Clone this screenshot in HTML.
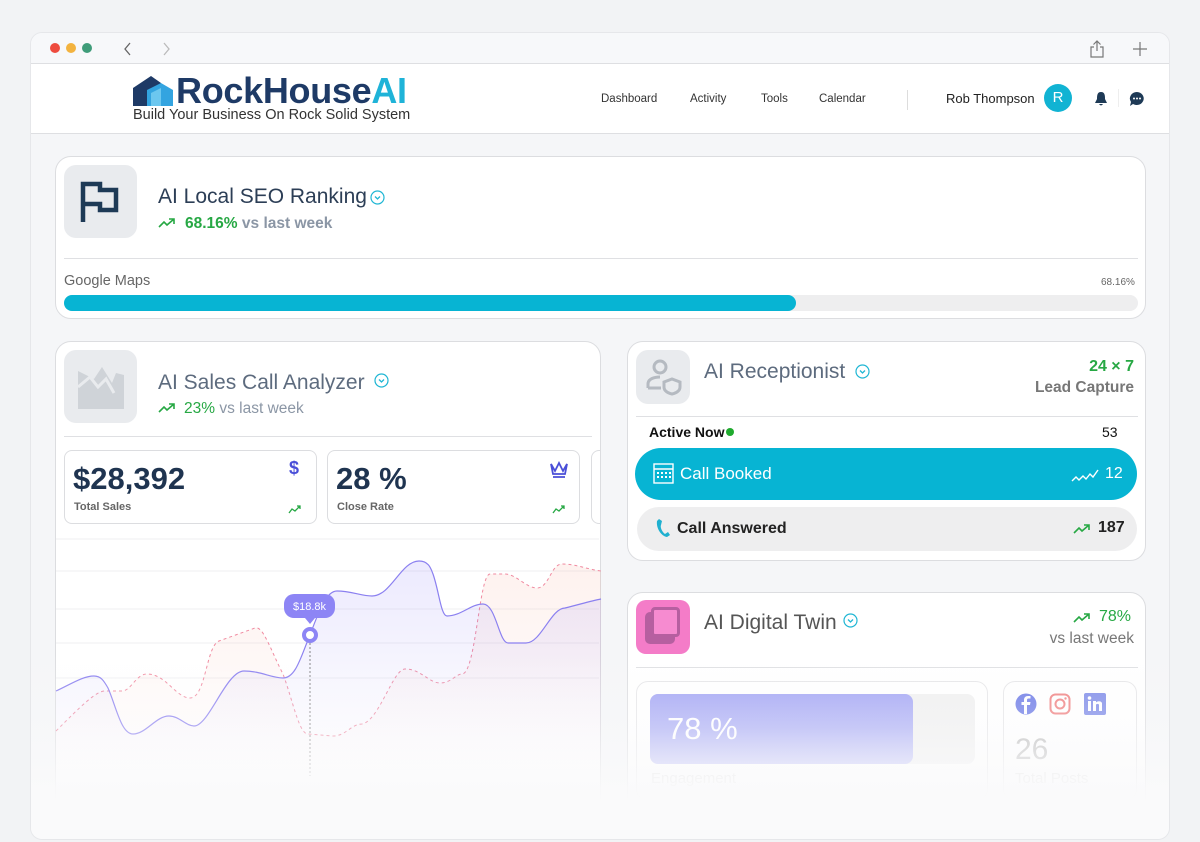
<!DOCTYPE html>
<html><head><meta charset="utf-8"><style>
*{box-sizing:border-box;margin:0;padding:0}
body{width:1200px;height:842px;background:#f2f3f5;font-family:"Liberation Sans",sans-serif;position:relative;overflow:hidden}
.a{position:absolute}
.win{left:30px;top:32px;width:1140px;height:808px;background:#f5f6f8;border-radius:12px;overflow:hidden;border:1px solid #e6e7ea}
.card{background:#fff;border:1px solid #dcdde0;border-radius:16px}
.ico{background:#e9ebee;border-radius:12px}
.t{color:#2c3e56}
.g{color:#27a844}
.mut{color:#8b96a5}
.sep{height:1px;background:#dfe0e3}
</style></head><body>
<div class="a win">
 <div class="a" style="left:0;top:0;width:1140px;height:31px;background:#f7f8fa;border-bottom:1px solid #dedfe2"></div>
 <div class="a" style="left:19px;top:10px;width:10px;height:10px;border-radius:50%;background:#ee4b3e"></div>
 <div class="a" style="left:35px;top:10px;width:10px;height:10px;border-radius:50%;background:#f3b33f"></div>
 <div class="a" style="left:51px;top:10px;width:10px;height:10px;border-radius:50%;background:#3f9c79"></div>
 <svg class="a" style="left:90px;top:8px" width="14" height="16"><path d="M9 2 L4 8 L9 14" stroke="#666" stroke-width="1.3" fill="none"/></svg>
 <svg class="a" style="left:128px;top:8px" width="14" height="16"><path d="M5 2 L10 8 L5 14" stroke="#bbb" stroke-width="1.3" fill="none"/></svg>
 <svg class="a" style="left:1057px;top:6px" width="18" height="20"><path d="M9 2 V12 M5.5 5.5 L9 2 L12.5 5.5 M6 8 H3 V18 H15 V8 H12" stroke="#777" stroke-width="1.2" fill="none"/></svg>
 <svg class="a" style="left:1101px;top:8px" width="16" height="16"><path d="M8 1 V15 M1 8 H15" stroke="#777" stroke-width="1.2"/></svg>
 <div class="a" style="left:0;top:31px;width:1140px;height:70px;background:#fff;border-bottom:1px solid #dedfe2"></div>
 <svg class="a" style="left:102px;top:43px" width="42" height="30"><path d="M0 12 L18 0 L28 7 L28 30 L0 30Z" fill="#1e3a66"/><path d="M14 30 L14 14 L28 7 L40 14 L40 30Z" fill="#33a4e0"/><path d="M18 30 L18 17 L28 12 L28 30Z" fill="#6cc7ef"/></svg>
 <div class="a" style="left:145px;top:37px;font-size:36px;font-weight:bold;color:#1e3a66;letter-spacing:-0.3px">RockHouse<span style="color:#1fb3d8">AI</span></div>
 <div class="a" style="left:102px;top:74px;font-size:14.5px;color:#333">Build Your Business On Rock Solid System</div>
 <div class="a" style="left:570px;top:60px;font-size:11.5px;color:#333">Dashboard</div>
 <div class="a" style="left:659px;top:60px;font-size:11.5px;color:#333">Activity</div>
 <div class="a" style="left:730px;top:60px;font-size:11.5px;color:#333">Tools</div>
 <div class="a" style="left:788px;top:60px;font-size:11.5px;color:#333">Calendar</div>
 <div class="a" style="left:876px;top:57px;width:1px;height:20px;background:#ddd"></div>
 <div class="a" style="left:915px;top:58px;font-size:13px;color:#222">Rob Thompson</div>
 <div class="a" style="left:1013px;top:51px;width:28px;height:28px;border-radius:50%;background:#11b3d3;color:#fff;font-size:15px;text-align:center;line-height:28px">R</div>
 <svg class="a" style="left:1063px;top:58px" width="14" height="16"><path d="M7 1 C3 1 3 5 3 8 L1 12 H13 L11 8 C11 5 11 1 7 1Z M5 13 Q7 16 9 13Z" fill="#1e3a56"/></svg>
 <div class="a" style="left:1087px;top:56px;width:1px;height:18px;background:#eee"></div>
 <svg class="a" style="left:1098px;top:58px" width="16" height="16"><path d="M8 1 A7 6.5 0 1 1 4 13 L1 15 L2 11 A7 6.5 0 0 1 8 1Z" fill="#1e3a56"/><circle cx="5" cy="7.5" r="1" fill="#fff"/><circle cx="8" cy="7.5" r="1" fill="#fff"/><circle cx="11" cy="7.5" r="1" fill="#fff"/></svg>

 <div class="a card" style="left:24px;top:123px;width:1091px;height:163px"></div>
 <div class="a ico" style="left:33px;top:132px;width:73px;height:73px"></div>
 <svg class="a" style="left:48px;top:147px" width="42" height="46"><path d="M4 42 V4 H21 V10 H37 V30 H21 V24 H4" stroke="#1e3a56" stroke-width="4.5" fill="none"/></svg>
 <div class="a t" style="left:127px;top:152px;font-size:21px">AI Local SEO Ranking</div>
 <svg class="a" style="left:339px;top:157px" width="15" height="15"><circle cx="7.5" cy="7.5" r="6.5" stroke="#1fb6d4" stroke-width="1.2" fill="none"/><path d="M5 6.5 L7.5 9 L10 6.5" stroke="#1fb6d4" stroke-width="1.3" fill="none"/></svg>
 <svg class="a" style="left:127px;top:184px" width="18" height="12"><path d="M1 10 L6 5 L9 8 L16 2 M11 2 H16 V7" stroke="#27a844" stroke-width="1.6" fill="none"/></svg>
 <div class="a" style="left:154px;top:182px;font-size:15.5px"><b class="g">68.16%</b> <span class="mut" style="font-weight:bold">vs last week</span></div>
 <div class="a sep" style="left:33px;top:225px;width:1074px"></div>
 <div class="a" style="left:33px;top:240px;font-size:14.5px;color:#666">Google Maps</div>
 <div class="a" style="left:1070px;top:244px;font-size:10px;color:#666">68.16%</div>
 <div class="a" style="left:33px;top:262px;width:1074px;height:16px;border-radius:8px;background:#eeeeef"></div>
 <div class="a" style="left:33px;top:262px;width:732px;height:16px;border-radius:8px;background:#07b4d3"></div>

 <div class="a card" style="left:24px;top:308px;width:546px;height:500px;overflow:hidden">
  <div class="a" style="left:535px;top:108px;width:20px;height:74px;border:1px solid #dcdde0;border-radius:8px;background:#fff"></div>
 </div>
 <div class="a ico" style="left:33px;top:317px;width:73px;height:73px"></div>
 <svg class="a" style="left:45px;top:330px" width="50" height="48"><path d="M2 8 L2 46 H48 V12 L40 10 L36 20 L26 4 L18 16 Z" fill="#cfd3d8"/><path d="M2 24 L14 14 L22 24 L30 16 L38 30" stroke="#e9ebee" stroke-width="3" fill="none"/></svg>
 <div class="a" style="left:127px;top:338px;font-size:21px;color:#5d6b7e">AI Sales Call Analyzer</div>
 <svg class="a" style="left:343px;top:340px" width="15" height="15"><circle cx="7.5" cy="7.5" r="6.5" stroke="#1fb6d4" stroke-width="1.2" fill="none"/><path d="M5 6.5 L7.5 9 L10 6.5" stroke="#1fb6d4" stroke-width="1.3" fill="none"/></svg>
 <svg class="a" style="left:127px;top:369px" width="18" height="12"><path d="M1 10 L6 5 L9 8 L16 2 M11 2 H16 V7" stroke="#27a844" stroke-width="1.6" fill="none"/></svg>
 <div class="a" style="left:153px;top:367px;font-size:15.5px"><span class="g">23%</span> <span class="mut">vs last week</span></div>
 <div class="a sep" style="left:33px;top:403px;width:528px"></div>
 <div class="a" style="left:33px;top:417px;width:253px;height:74px;border:1px solid #dcdde0;border-radius:8px;background:#fff"></div>
 <div class="a t" style="left:42px;top:428px;font-size:31px;font-weight:bold;color:#1f3450">$28,392</div>
 <div class="a" style="left:43px;top:468px;font-size:11px;color:#666;font-weight:bold">Total Sales</div>
 <div class="a" style="left:258px;top:425px;font-size:18px;color:#4a4fd8;font-weight:bold">$</div>
 <svg class="a" style="left:257px;top:472px" width="14" height="9"><path d="M1 8 L4 4 L7 6 L12 1 M9 1 H12 V4" stroke="#27a844" stroke-width="1.3" fill="none"/></svg>
 <div class="a" style="left:296px;top:417px;width:253px;height:74px;border:1px solid #dcdde0;border-radius:8px;background:#fff"></div>
 <div class="a" style="left:305px;top:428px;font-size:31px;font-weight:bold;color:#1f3450">28 %</div>
 <div class="a" style="left:306px;top:468px;font-size:11px;color:#666;font-weight:bold">Close Rate</div>
 <svg class="a" style="left:518px;top:428px" width="20" height="18"><path d="M2 3 L6 10 L10 2 L14 10 L18 3 L16 13 H4Z M4 16 H16" stroke="#4a4fd8" stroke-width="1.8" fill="none"/></svg>
 <svg class="a" style="left:521px;top:472px" width="14" height="9"><path d="M1 8 L4 4 L7 6 L12 1 M9 1 H12 V4" stroke="#27a844" stroke-width="1.3" fill="none"/></svg>
 <svg class="a" style="left:-30px;top:-32px" width="1200" height="842" viewBox="0 0 1200 842">
  <defs>
   <linearGradient id="pg" x1="0" y1="0" x2="0" y2="1"><stop offset="0" stop-color="#8b7cf6" stop-opacity=".16"/><stop offset="1" stop-color="#8b7cf6" stop-opacity="0"/></linearGradient>
   <linearGradient id="rg" x1="0" y1="0" x2="0" y2="1"><stop offset="0" stop-color="#f6a08a" stop-opacity=".14"/><stop offset="1" stop-color="#f6a08a" stop-opacity="0"/></linearGradient>
  </defs>
  <g stroke="#efeff2" stroke-width="1"><path d="M55 538 H598 M55 570 H598 M55 608 H598 M55 642 H598 M55 677 H598"/></g>
  <path d="M55 730 C80 705 95 690 104 690 L121 690 C130 690 135 673 146 673 C165 673 175 697 189 697 C205 697 205 645 218 640 L254 627 C262 624 270 650 282 673 C292 700 298 733 307 733 L332 735 C345 735 350 723 361 723 C378 720 392 668 404 668 C420 668 428 682 439 682 C450 682 455 673 461 673 C475 673 478 573 489 573 L504 573 C515 573 525 587 536 587 C548 587 550 563 561 563 C575 563 585 568 600 570 V770 H55Z" fill="url(#rg)"/>
  <path d="M55 730 C80 705 95 690 104 690 L121 690 C130 690 135 673 146 673 C165 673 175 697 189 697 C205 697 205 645 218 640 L254 627 C262 624 270 650 282 673 C292 700 298 733 307 733 L332 735 C345 735 350 723 361 723 C378 720 392 668 404 668 C420 668 428 682 439 682 C450 682 455 673 461 673 C475 673 478 573 489 573 L504 573 C515 573 525 587 536 587 C548 587 550 563 561 563 C575 563 585 568 600 570" stroke="#f08aa0" stroke-width="1" stroke-dasharray="3 3" fill="none"/>
  <path d="M55 690 C70 683 82 675 93 675 C100 675 103 680 107 687 C115 705 120 733 132 733 C145 733 155 715 168 715 C178 715 185 725 193 725 C208 725 225 670 243 670 C260 670 270 677 282 677 C295 677 300 655 309 634 C318 610 325 590 336 590 C350 590 360 595 371 595 C390 595 400 560 418 560 C428 560 430 568 432 573 C438 590 440 615 446 615 C460 615 470 603 482 603 C495 603 498 642 507 642 L525 642 C540 642 550 607 564 607 C580 603 590 600 600 598 V770 H55Z" fill="url(#pg)"/>
  <path d="M55 690 C70 683 82 675 93 675 C100 675 103 680 107 687 C115 705 120 733 132 733 C145 733 155 715 168 715 C178 715 185 725 193 725 C208 725 225 670 243 670 C260 670 270 677 282 677 C295 677 300 655 309 634 C318 610 325 590 336 590 C350 590 360 595 371 595 C390 595 400 560 418 560 C428 560 430 568 432 573 C438 590 440 615 446 615 C460 615 470 603 482 603 C495 603 498 642 507 642 L525 642 C540 642 550 607 564 607 C580 603 590 600 600 598" stroke="#8b80f0" stroke-width="1.2" fill="none"/>
  <path d="M309 634 V775" stroke="#666" stroke-width="0.8" stroke-dasharray="2 2"/>
  <circle cx="309" cy="634" r="6" fill="#fff" stroke="#8d85f5" stroke-width="4"/>
  <rect x="283" y="593" width="51" height="24" rx="10" fill="#8d85f5"/><path d="M304 617 L309 623 L314 617Z" fill="#8d85f5"/>
  <text x="308.5" y="609" font-size="11" fill="#fff" text-anchor="middle" font-family="Liberation Sans">$18.8k</text>
 </svg>

 <div class="a card" style="left:596px;top:308px;width:519px;height:220px"></div>
 <div class="a ico" style="left:605px;top:317px;width:54px;height:54px"></div>
 <svg class="a" style="left:613px;top:323px" width="40" height="40"><circle cx="16" cy="11" r="6" stroke="#b5bac1" stroke-width="3" fill="none"/><path d="M4 32 V28 C4 23 10 21 16 21 M20 26 L28 23 L36 26 V31 C36 35 32 37 28 38 C24 37 20 35 20 31Z M4 32 H17" stroke="#b5bac1" stroke-width="3" fill="none"/></svg>
 <div class="a" style="left:673px;top:327px;font-size:21px;color:#5d6b7e">AI Receptionist</div>
 <svg class="a" style="left:824px;top:331px" width="15" height="15"><circle cx="7.5" cy="7.5" r="6.5" stroke="#1fb6d4" stroke-width="1.2" fill="none"/><path d="M5 6.5 L7.5 9 L10 6.5" stroke="#1fb6d4" stroke-width="1.3" fill="none"/></svg>
 <div class="a g" style="left:1000px;top:325px;width:103px;text-align:right;font-size:16px;font-weight:bold">24 × 7</div>
 <div class="a" style="left:980px;top:346px;width:123px;text-align:right;font-size:15.5px;font-weight:bold;color:#777">Lead Capture</div>
 <div class="a sep" style="left:605px;top:383px;width:502px"></div>
 <div class="a" style="left:618px;top:391px;font-size:14px;font-weight:bold;color:#111">Active Now <span style="display:inline-block;width:8px;height:8px;border-radius:50%;background:#1faa2e;vertical-align:1px;margin-left:-2px"></span></div>
 <div class="a" style="left:1071px;top:391px;font-size:14px;color:#111">53</div>
 <div class="a" style="left:604px;top:415px;width:502px;height:52px;border-radius:26px;background:#07b4d3"></div>
 <svg class="a" style="left:622px;top:428px" width="22" height="24"><rect x="1" y="3" width="19" height="19" fill="none" stroke="#fff" stroke-width="1.4"/><path d="M1 8 H20" stroke="#fff" stroke-width="1.4"/><g fill="#fff"><rect x="4" y="11" width="2" height="2"/><rect x="8" y="11" width="2" height="2"/><rect x="12" y="11" width="2" height="2"/><rect x="16" y="11" width="2" height="2"/><rect x="4" y="15" width="2" height="2"/><rect x="8" y="15" width="2" height="2"/><rect x="12" y="15" width="2" height="2"/><rect x="16" y="15" width="2" height="2"/></g></svg>
 <div class="a" style="left:649px;top:431px;font-size:17px;color:#fff">Call Booked</div>
 <svg class="a" style="left:1040px;top:436px" width="28" height="14"><path d="M1 12 L5 8 L8 11 L12 7 L15 10 L19 5 L22 8 L27 1" stroke="#fff" stroke-width="1.4" fill="none"/></svg>
 <div class="a" style="left:1074px;top:432px;font-size:16px;color:#fff">12</div>
 <div class="a" style="left:606px;top:474px;width:500px;height:44px;border-radius:22px;background:#eeeeef"></div>
 <svg class="a" style="left:624px;top:485px" width="16" height="20"><path d="M4 1 L7 3 L6 7 C5 9 7 14 10 16 L13 14 L15 17 L12 19 C6 18 1 10 2 3Z" fill="#1fb0d0"/></svg>
 <div class="a" style="left:646px;top:487px;font-size:16px;font-weight:bold;color:#222">Call Answered</div>
 <svg class="a" style="left:1042px;top:490px" width="18" height="12"><path d="M1 10 L6 5 L9 8 L16 2 M11 2 H16 V7" stroke="#27a844" stroke-width="1.6" fill="none"/></svg>
 <div class="a" style="left:1067px;top:486px;font-size:16px;font-weight:bold;color:#222">187</div>

 <div class="a card" style="left:596px;top:559px;width:519px;height:260px"></div>
 <div class="a" style="left:605px;top:567px;width:54px;height:54px;border-radius:10px;background:#f47cc8"></div>
 <div class="a" style="left:614px;top:579px;width:30px;height:32px;border-radius:5px;background:#b65fa0"></div>
 <div class="a" style="left:620px;top:574px;width:29px;height:30px;border-radius:4px;background:#f68bd0;border:3px solid #b65fa0"></div>
 <div class="a" style="left:673px;top:578px;font-size:21px;color:#555">AI Digital Twin</div>
 <svg class="a" style="left:812px;top:580px" width="15" height="15"><circle cx="7.5" cy="7.5" r="6.5" stroke="#1fb6d4" stroke-width="1.2" fill="none"/><path d="M5 6.5 L7.5 9 L10 6.5" stroke="#1fb6d4" stroke-width="1.3" fill="none"/></svg>
 <svg class="a" style="left:1042px;top:579px" width="18" height="12"><path d="M1 10 L6 5 L9 8 L16 2 M11 2 H16 V7" stroke="#27a844" stroke-width="1.6" fill="none"/></svg>
 <div class="a g" style="left:1068px;top:575px;font-size:16px">78%</div>
 <div class="a" style="left:990px;top:597px;width:113px;text-align:right;font-size:15.5px;color:#777">vs last week</div>
 <div class="a sep" style="left:605px;top:634px;width:502px"></div>
 <div class="a" style="left:605px;top:648px;width:352px;height:120px;border:1px solid #e6e6e8;border-radius:12px;background:#fff"></div>
 <div class="a" style="left:619px;top:661px;width:325px;height:70px;border-radius:8px;background:#f0f0f0"></div>
 <div class="a" style="left:619px;top:661px;width:263px;height:70px;border-radius:8px;background:linear-gradient(#a3a5f4,#b6b8f6)"></div>
 <div class="a" style="left:636px;top:678px;font-size:31px;color:#fff">78 %</div>
 <div class="a" style="left:972px;top:648px;width:134px;height:120px;border:1px solid #e6e6e8;border-radius:12px;background:#fff"></div>
 <svg class="a" style="left:984px;top:660px" width="22" height="22"><circle cx="11" cy="11" r="10.5" fill="#6b79e6"/><path d="M12 21 V12 H15 L15.5 9 H12 V7 C12 6 12.5 5.5 13.5 5.5 H15.5 V3 H13 C10.5 3 9 4.5 9 7 V9 H6.5 V12 H9 V21Z" fill="#fff"/></svg>
 <svg class="a" style="left:1018px;top:660px" width="22" height="22"><rect x="1.5" y="1.5" width="19" height="19" rx="5" fill="none" stroke="#f08080" stroke-width="2"/><circle cx="11" cy="11" r="4.5" fill="none" stroke="#f08080" stroke-width="2"/><circle cx="16.5" cy="5.5" r="1.2" fill="#f08080"/></svg>
 <svg class="a" style="left:1053px;top:660px" width="22" height="22"><rect width="22" height="22" rx="2" fill="#7d8ae8"/><rect x="4" y="8" width="3" height="10" fill="#fff"/><circle cx="5.5" cy="5" r="1.8" fill="#fff"/><path d="M9 18 V8 H12 V9.5 C13 8 17 7.5 18 10 V18 H15 V12 C15 10.5 12 10.5 12 12 V18Z" fill="#fff"/></svg>
 <div class="a" style="left:984px;top:700px;font-size:30px;color:#bbb">26</div>
 <div class="a" style="left:620px;top:737px;font-size:15px;color:#ddd">Engagement</div>
 <div class="a" style="left:984px;top:737px;font-size:15px;color:#ddd">Total Posts</div>
 <div class="a" style="left:0;top:620px;width:1140px;height:188px;background:linear-gradient(rgba(250,250,251,0) 0%,rgba(250,250,251,0.35) 40%,rgba(250,250,251,0.92) 72%,#fafafb 80%)"></div>
</div>
</body></html>
